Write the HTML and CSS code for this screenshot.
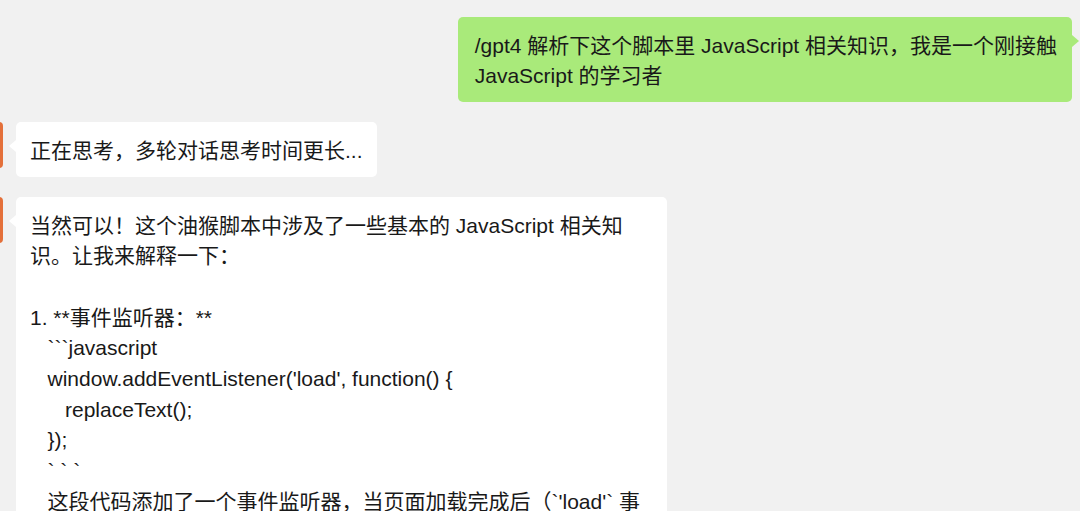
FILE: index.html
```html
<!DOCTYPE html>
<html lang="zh-CN">
<head>
<meta charset="utf-8">
<title>Chat</title>
<link rel="stylesheet" href="styles.css">
</head>
<body>
<div class="chat">
  <div class="row row-out">
    <div class="bubble bubble-out">/gpt4 解析下这个脚本里 JavaScript 相关知识，我是一个刚接触<br>JavaScript 的学习者</div>
  </div>
  <div class="row row-in">
    <div class="avatar"></div>
    <div class="bubble bubble-in">正在思考，多轮对话思考时间更长...</div>
  </div>
  <div class="row row-in">
    <div class="avatar"></div>
    <div class="bubble bubble-in bubble-long">当然可以！这个油猴脚本中涉及了一些基本的 JavaScript 相关知识。让我来解释一下：

1. **事件监听器：**
   &#96;&#96;&#96;javascript
   window.addEventListener('load', function() {
      replaceText();
   });
   &#96; &#96; &#96;
   这段代码添加了一个事件监听器，当页面加载完成后（&#96;'load'&#96; 事件）时，会调用 &#96;replaceText()&#96; 函数。

2. **函数定义：**
   &#96;&#96;&#96;javascript
   function replaceText() {
   &#96;&#96;&#96;</div>
  </div>
</div>
</body>
</html>
```

FILE: styles.css
```css
html, body {
  margin: 0;
  padding: 0;
  background: #f1f1f1;
  overflow: hidden;
}

.chat {
  width: 1080px;
  height: 511px;
  box-sizing: border-box;
  padding-top: 17px;
  display: flex;
  flex-direction: column;
  gap: 20px;
  overflow: hidden;
  font-family: "Liberation Sans", "Noto Sans CJK SC", sans-serif;
  font-size: 21px;
  line-height: 30.67px;
  color: #191919;
}

.row {
  display: flex;
  align-items: flex-start;
}

.row-out {
  justify-content: flex-end;
  padding-right: 8px;
}

.row-in {
  gap: 13px;
}

.avatar {
  flex: none;
  width: 46px;
  height: 46px;
  margin-left: -43px;
  border-radius: 4px;
  background: #e4703a;
}

.bubble {
  position: relative;
  padding: 13.5px 14px 10.5px;
  border-radius: 5px;
  box-sizing: border-box;
}

.bubble::after {
  content: "";
  position: absolute;
  top: 18px;
  width: 0;
  height: 0;
  border-top: 6px solid transparent;
  border-bottom: 6px solid transparent;
}

.bubble-out {
  background: #a9ea7a;
  white-space: nowrap;
  padding-left: 17px;
  padding-right: 15px;
}

.bubble-out::after {
  right: -7px;
  border-left: 7px solid #a9ea7a;
}

.bubble-in {
  background: #ffffff;
}

.bubble-in::after {
  left: -7px;
  border-right: 7px solid #ffffff;
}

.bubble-long {
  flex: none;
  width: 651px;
  white-space: pre-wrap;
}
```
